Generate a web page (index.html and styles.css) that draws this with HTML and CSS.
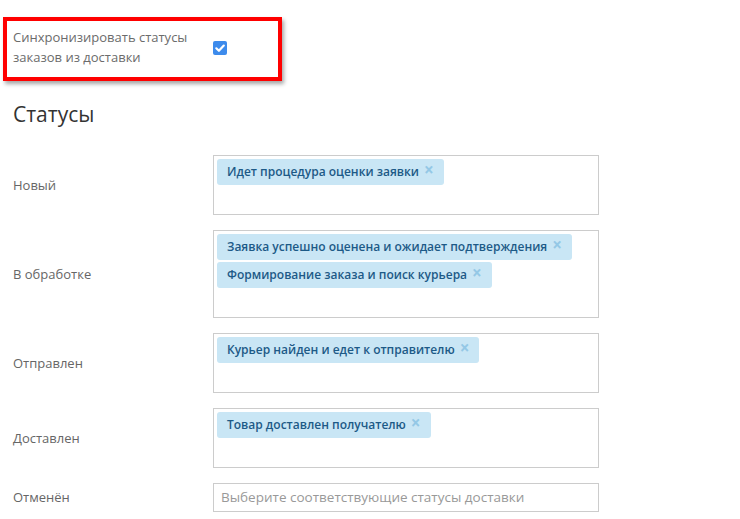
FILE: index.html
```html
<!DOCTYPE html>
<html lang="ru">
<head>
    <meta charset="UTF-8">
    <title>Статусы доставки</title>
    <link rel="stylesheet" href="styles.css">
</head>
<body>
    <div class="sync">
        <div class="sync-label">Синхронизировать статусы заказов из доставки</div>
        <span class="checkbox">
            <svg width="14" height="14" viewBox="0 0 14 14"><path d="M3.3 7.3 L5.9 9.8 L10.8 4.6" fill="none" stroke="#fff" stroke-width="2.2" stroke-linecap="round" stroke-linejoin="round"/></svg>
        </span>
    </div>

    <h2 class="title">Статусы</h2>

    <div class="row">
        <div class="label">Новый</div>
        <div class="select">
            <span class="tag">Идет процедура оценки заявки <span class="x">×</span></span>
            <div class="search"></div>
        </div>
    </div>

    <div class="row">
        <div class="label">В обработке</div>
        <div class="select">
            <span class="tag">Заявка успешно оценена и ожидает подтверждения <span class="x">×</span></span>
            <span class="tag">Формирование заказа и поиск курьера <span class="x">×</span></span>
            <div class="search"></div>
        </div>
    </div>

    <div class="row">
        <div class="label">Отправлен</div>
        <div class="select">
            <span class="tag">Курьер найден и едет к отправителю <span class="x">×</span></span>
            <div class="search"></div>
        </div>
    </div>

    <div class="row">
        <div class="label">Доставлен</div>
        <div class="select">
            <span class="tag">Товар доставлен получателю <span class="x">×</span></span>
            <div class="search"></div>
        </div>
    </div>

    <div class="row">
        <div class="label">Отменён</div>
        <div class="select empty">Выберите соответствующие статусы доставки</div>
    </div>
</body>
</html>
```

FILE: styles.css
```css
body {
    margin: 0;
    font-family: "Open Sans", "Noto Sans", sans-serif;
    font-size: 13px;
    color: #666;
    background: #fff;
}
.sync {
    display: flex;
    align-items: center;
    width: 265px;
    margin: 17px 0 0 3px;
    padding: 7px 0 10px 6px;
    box-sizing: content-box;
    border: 4px solid #ff0000;
    box-shadow: 2px 3px 4px rgba(0, 0, 0, 0.35);
}
.sync-label {
    width: 200px;
    line-height: 19.5px;
    color: #6b6b6b;
}
.checkbox {
    display: flex;
    width: 14px;
    height: 14px;
    border-radius: 2px;
    background: #3d8bec;
}
.title {
    margin: 21px 0 0 13px;
    font-size: 21px;
    font-weight: 400;
    line-height: 25px;
    color: #333;
}
.row {
    display: flex;
    align-items: center;
    margin: 0 0 15px 13px;
}
.title + .row { margin-top: 27.5px; }
.label {
    width: 200px;
    color: #666;
}
.select {
    width: 378px;
    padding: 3px;
    border: 1px solid #ccc;
    display: flex;
    flex-direction: column;
    align-items: flex-start;
    box-sizing: content-box;
}
.tag {
    display: flex;
    align-items: center;
    height: 26px;
    margin-bottom: 2px;
    padding: 0 10px;
    line-height: 18px;
    font-size: 12px;
    font-weight: 600;
    color: #1d5a87;
    background: #c9e6f5;
    border-radius: 3px;
    box-sizing: border-box;
}
.tag .x {
    margin-left: 5px;
    margin-top: -3px;
    color: #94c8e6;
    font-size: 17px;
    font-weight: 700;
    line-height: 18px;
}
.search {
    height: 24px;
}
.select.empty {
    padding: 0 7px;
    width: 370px;
    height: 27px;
    line-height: 27px;
    font-size: 13.5px;
    color: #999;
    display: block;
}
```
